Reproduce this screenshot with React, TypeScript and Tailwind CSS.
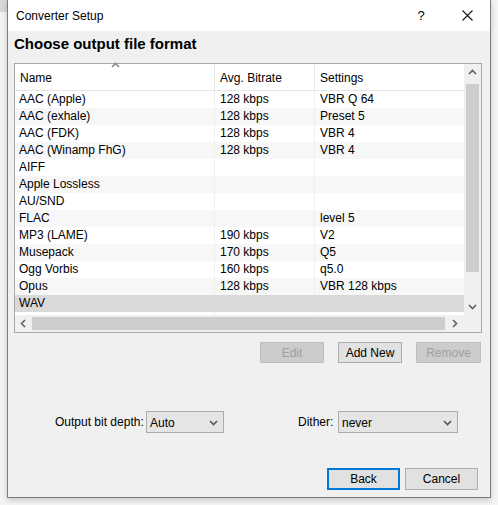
import React from "react";

const rows: [string, string, string][] = [
  ["AAC (Apple)", "128 kbps", "VBR Q 64"],
  ["AAC (exhale)", "128 kbps", "Preset 5"],
  ["AAC (FDK)", "128 kbps", "VBR 4"],
  ["AAC (Winamp FhG)", "128 kbps", "VBR 4"],
  ["AIFF", "", ""],
  ["Apple Lossless", "", ""],
  ["AU/SND", "", ""],
  ["FLAC", "", "level 5"],
  ["MP3 (LAME)", "190 kbps", "V2"],
  ["Musepack", "170 kbps", "Q5"],
  ["Ogg Vorbis", "160 kbps", "q5.0"],
  ["Opus", "128 kbps", "VBR 128 kbps"],
  ["WAV", "", ""],
];

const Chevron = ({ dir, className }: { dir: "up" | "down" | "left" | "right"; className?: string }) => {
  const d =
    dir === "up"
      ? "M1 6 L4.5 2.5 L8 6"
      : dir === "down"
      ? "M1 3 L4.5 6.5 L8 3"
      : dir === "left"
      ? "M6 1 L2.5 4.5 L6 8"
      : "M3 1 L6.5 4.5 L3 8";
  return (
    <svg width="9" height="9" viewBox="0 0 9 9" className={className}>
      <path d={d} fill="none" stroke="currentColor" strokeWidth="1.6" />
    </svg>
  );
};

export default function App() {
  const font = { fontFamily: '"Liberation Sans", Arial, sans-serif' };
  return (
    <div className="w-[498px] h-[505px] bg-[#f4f4f4] relative overflow-hidden text-[12px] text-black" style={font}>
      <div className="absolute left-0 top-0 w-[7px] h-[12px] bg-[#d9d9d9]" />
      <div className="ml-[7px] w-[484px] h-[498px] flex flex-col border-x border-b border-[#7d7d7d] bg-[#f0f0f0] shadow-[0_2px_6px_rgba(0,0,0,0.2)] relative">
        {/* title bar */}
        <div className="h-[31px] bg-white flex items-center pl-[8px] shrink-0">
          <span className="text-[12px] flex-1 pt-[1px]">Converter Setup</span>
          <span className="w-[46px] text-center text-[13px] mr-[0px]">?</span>
          <span className="w-[46px] flex justify-center">
            <svg width="11" height="11" viewBox="0 0 11 11">
              <path d="M0.5 0.5 L10.5 10.5 M10.5 0.5 L0.5 10.5" stroke="#111" strokeWidth="1.1" />
            </svg>
          </span>
        </div>
        {/* content */}
        <div className="flex flex-col px-[6px] flex-1">
          <div className="font-bold text-[15px] h-[24px] flex items-center mt-[1px]">Choose output file format</div>
          {/* list */}
          <div className="mt-[7px] w-[468px] h-[270px] border border-[#a8a8a8] bg-white flex flex-col">
            <div className="flex flex-1 min-h-0">
              <div className="w-[449px] flex flex-col">
                {/* header */}
                <div className="h-[27px] flex shrink-0 border-b border-[#e5e5e5] relative">
                  <div className="w-[200px] border-r border-[#e5e5e5] pl-[5px] flex items-center pt-[1px] relative">
                    Name
                    <span className="absolute left-[96px] top-[-3px] text-[#888]">
                      <Chevron dir="up" />
                    </span>
                  </div>
                  <div className="w-[100px] border-r border-[#e5e5e5] pl-[5px] flex items-center pt-[1px]">Avg. Bitrate</div>
                  <div className="flex-1 pl-[5px] flex items-center pt-[1px]">Settings</div>
                </div>
                {/* rows */}
                <div className="flex flex-col flex-1">
                  {rows.map((r, i) => {
                    const sel = i === rows.length - 1;
                    const line = sel ? "border-transparent" : "border-[#f0f0f0]";
                    return (
                      <div
                        key={r[0]}
                        className={
                          "h-[17px] flex shrink-0 " +
                          (sel ? "bg-[#d9d9d9]" : i % 2 === 1 ? "bg-[#f7f7f7]" : "bg-white")
                        }
                      >
                        <div className={"w-[200px] border-r pl-[4px] leading-[17px] " + line}>{r[0]}</div>
                        <div className={"w-[100px] border-r pl-[5px] leading-[17px] " + line}>{r[1]}</div>
                        <div className="flex-1 pl-[5px] leading-[17px]">{r[2]}</div>
                      </div>
                    );
                  })}
                  <div className="flex flex-1">
                    <div className="w-[200px] border-r border-[#f0f0f0]" />
                    <div className="w-[100px] border-r border-[#f0f0f0]" />
                  </div>
                </div>
              </div>
              {/* vertical scrollbar */}
              <div className="w-[17px] bg-[#f0f0f0] flex flex-col items-center">
                <div className="h-[17px] flex items-center justify-center text-[#606060]">
                  <Chevron dir="up" />
                </div>
                <div className="flex-1 w-full px-[2px] flex flex-col">
                  <div className="h-[3px]" />
                  <div className="h-[188px] bg-[#cdcdcd]" />
                </div>
                <div className="h-[17px] flex items-center justify-center text-[#606060]">
                  <Chevron dir="down" />
                </div>
              </div>
            </div>
            {/* horizontal scrollbar */}
            <div className="h-[17px] flex shrink-0">
              <div className="w-[449px] bg-[#f0f0f0] flex items-center">
                <div className="w-[17px] flex justify-center text-[#606060]">
                  <Chevron dir="left" />
                </div>
                <div className="h-[13px] w-[413px] bg-[#cdcdcd]" />
                <div className="flex-1 flex justify-center text-[#606060]">
                  <Chevron dir="right" />
                </div>
              </div>
              <div className="w-[17px] bg-[#f0f0f0]" />
            </div>
          </div>
          {/* action buttons */}
          <div className="flex justify-end gap-[14px] mt-[9px] pr-[3px]">
            <div className="w-[64px] h-[21px] border border-[#bfbfbf] bg-[#cccccc] text-[#a0a0a0] flex items-center justify-center">Edit</div>
            <div className="w-[64px] h-[21px] border border-[#adadad] bg-[#e1e1e1] flex items-center justify-center">Add New</div>
            <div className="w-[65px] h-[21px] border border-[#bfbfbf] bg-[#cccccc] text-[#a0a0a0] flex items-center justify-center">Remove</div>
          </div>
          {/* selects */}
          <div className="flex items-center mt-[48px] h-[22px]">
            <span className="ml-[41px] w-[91px]">Output bit depth:</span>
            <div className="w-[78px] h-[22px] border border-[#acacac] bg-[#e5e5e5] flex items-center pl-[3px] pr-[5px] justify-between">
              <span className="pt-[1px]">Auto</span>
              <span className="text-[#555]"><Chevron dir="down" /></span>
            </div>
            <span className="ml-[74px] w-[40px]">Dither:</span>
            <div className="w-[120px] h-[22px] border border-[#acacac] bg-[#e5e5e5] flex items-center pl-[3px] pr-[5px] justify-between">
              <span className="pt-[1px]">never</span>
              <span className="text-[#555]"><Chevron dir="down" /></span>
            </div>
          </div>
          {/* bottom buttons */}
          <div className="flex justify-end gap-[5px] mt-[35px] pr-[6px]">
            <div className="w-[73px] h-[22px] border-2 border-[#0078d7] bg-[#e1e1e1] flex items-center justify-center">Back</div>
            <div className="w-[73px] h-[22px] border border-[#adadad] bg-[#e1e1e1] flex items-center justify-center">Cancel</div>
          </div>
        </div>
      </div>
    </div>
  );
}
